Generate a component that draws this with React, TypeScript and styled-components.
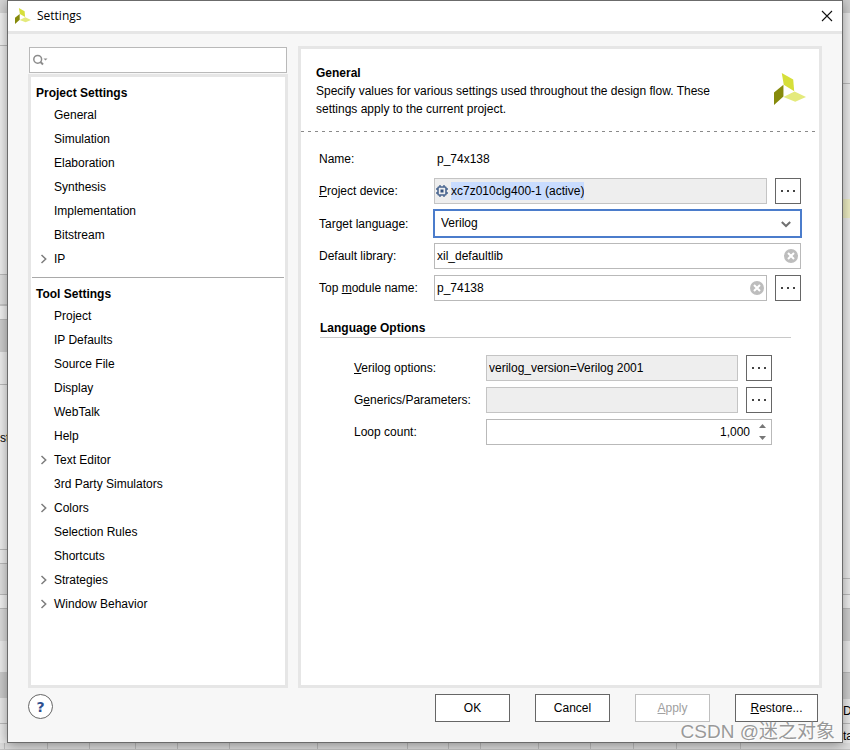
import React, { useState } from "react";
import styled, { createGlobalStyle } from "styled-components";

const GlobalStyle = createGlobalStyle`
  *, *::before, *::after { box-sizing: border-box; }
  html, body { margin: 0; padding: 0; }
  body, button, input, select {
    font-family: "Liberation Sans", Arial, sans-serif;
    font-size: 12px;
    line-height: 18px;
    color: #000;
  }
`;

/* ---------- application behind the dialog ---------- */

const Page = styled.div`
  display: grid;
  grid-template-columns: 7px minmax(0, 1fr) 7px;
  grid-template-rows: minmax(743px, 1fr) 7px;
  height: 100vh;
  min-height: 750px;
  overflow: hidden;
  background: #e6e6e6;
`;

const Edge = styled.div`
  display: flex;
  flex-direction: column;
  overflow: hidden;
`;

const Strip = styled.div<{ $h: number; $bg: string; $line?: boolean }>`
  flex: 0 0 ${(p) => p.$h}px;
  background: ${(p) => p.$bg};
  border-bottom: ${(p) => (p.$line ? "1px solid #bdbdbd" : "0")};
  line-height: ${(p) => Math.min(p.$h, 24)}px;
  white-space: nowrap;
`;

const BottomEdge = styled.div`
  grid-column: 1 / -1;
  display: flex;
  background: #dedede;
  border-bottom: 1px solid #c4c4c4;
`;

const Cell = styled.div<{ $w: number }>`
  flex: 0 1 ${(p) => p.$w}px;
  border-right: 1px solid #bdbdbd;
`;

/* ---------- dialog frame ---------- */

const Dialog = styled.section`
  position: relative;
  display: flex;
  flex-direction: column;
  min-width: 0;
  border: 1px solid #6b6b6b;
  background: #f7f7f7;
  box-shadow: 0 2px 12px rgba(0, 0, 0, 0.4);
  z-index: 1;
`;

const TitleBar = styled.header`
  display: flex;
  align-items: center;
  flex: 0 0 33px;
  padding: 0 9px 0 7px;
  background: #fff;
  border-bottom: 3px solid #e6e6e6;
`;

const Title = styled.h1`
  flex: 1;
  margin: 0 0 0 6px;
  font: 400 12px/18px "Open Sans", "Noto Sans", sans-serif;
`;

const CloseButton = styled.button`
  display: flex;
  padding: 0;
  border: 0;
  background: none;
`;

const Body = styled.div`
  flex: 1;
  display: flex;
  gap: 10px;
  min-height: 0;
  padding: 12px 20px 0;
`;

const Side = styled.div`
  display: flex;
  flex-direction: column;
  flex: 0 0 260px;
  padding-top: 1px;
`;

const SearchBox = styled.label`
  display: flex;
  align-items: center;
  height: 26px;
  margin: 0 1px 1px;
  padding: 0 3px;
  border: 1px solid #b9b9b9;
  background: #fff;
`;

const BareInput = styled.input`
  flex: 1;
  min-width: 0;
  padding: 0;
  border: 0;
  outline: 0;
  background: transparent;
`;

const Tree = styled.nav`
  flex: 1;
  padding-top: 6px;
  border: 3px solid #e6e6e6;
  background: #fff;
`;

const TreeHeading = styled.h2`
  margin: 0;
  padding-left: 5px;
  font-size: 12px;
  line-height: 20px;
`;

const TreeList = styled.ul`
  margin: 0;
  padding: 0;
  list-style: none;
`;

const TreeItem = styled.button`
  display: flex;
  align-items: center;
  width: 100%;
  height: 24px;
  padding: 0 0 0 9px;
  border: 0;
  background: none;
  text-align: left;
`;

const Twisty = styled.span`
  display: flex;
  flex: 0 0 14px;
`;

const TreeRule = styled.hr`
  height: 1px;
  margin: 6px 1px;
  border: 0;
  background: #a9a9a9;
`;

/* ---------- right panel ---------- */

const Panel = styled.main`
  flex: 1;
  min-width: 0;
  border: 3px solid #e6e6e6;
  background: #fff;
`;

const PanelHeader = styled.div`
  display: flex;
  justify-content: space-between;
  padding: 15px 13px 13px 15px;
`;

const PanelTitle = styled.h2`
  margin: 0;
  font-size: 12px;
  line-height: 18px;
`;

const Description = styled.p`
  max-width: 420px;
  margin: 0;
`;

const LogoSlot = styled.div`
  padding-top: 9px;
`;

const Dashes = styled.div`
  height: 1px;
  margin-right: 4px;
  background: repeating-linear-gradient(90deg, #8a8a8a 0 3px, transparent 3px 7px);
`;

const Form = styled.form`
  display: flex;
  flex-direction: column;
  gap: 6px;
  padding: 14px 18px 0;
`;

const Row = styled.div<{ $label: number }>`
  display: grid;
  grid-template-columns: ${(p) => p.$label}px minmax(0, 1fr);
  align-items: center;
  min-height: 26px;
`;

const Controls = styled.div`
  display: flex;
  gap: 8px;
`;

const Value = styled.output`
  padding-left: 3px;
`;

const Field = styled.div<{ $readOnly?: boolean }>`
  flex: 1;
  display: flex;
  align-items: center;
  min-width: 0;
  height: 26px;
  padding: 0 2px;
  border: 1px solid ${(p) => (p.$readOnly ? "#c4c4c4" : "#b9b9b9")};
  background: ${(p) => (p.$readOnly ? "#eee" : "#fff")};
`;

const DeviceField = styled(Field)`
  padding-left: 1px;
  gap: 3px;
`;

const SelectedInput = styled.input`
  field-sizing: content;
  height: 18px;
  padding: 0;
  border: 0;
  outline: 0;
  background: #c9dcfe;
`;

const IconButton = styled.button`
  display: flex;
  padding: 0;
  border: 0;
  background: none;
`;

const MoreButton = styled.button`
  display: flex;
  align-items: center;
  justify-content: center;
  flex: 0 0 26px;
  height: 26px;
  padding: 0;
  border: 1px solid #666;
  background: #fff;
`;

const Combo = styled.div`
  position: relative;
  flex: 1;
  margin: -1px;
`;

const Select = styled.select`
  appearance: none;
  display: block;
  width: 100%;
  height: 29px;
  padding: 0 24px 2px 6px;
  border: 2px solid #4b7ccb;
  border-radius: 0;
  outline: 0;
  background: #fff;
`;

const ComboArrow = styled.span`
  position: absolute;
  right: 11px;
  top: 12px;
  display: flex;
  pointer-events: none;
`;

const GroupTitle = styled.h3`
  margin: 12px 10px 11px 1px;
  border-bottom: 1px solid #c8c8c8;
  font-size: 12px;
  line-height: 18px;
`;

const Group = styled.div`
  display: flex;
  flex-direction: column;
  gap: 6px;
  padding: 0 29px 0 35px;
`;

const NumberInput = styled(BareInput)`
  text-align: right;
  padding-right: 9px;
`;

const Spinner = styled.div`
  display: flex;
  flex-direction: column;
  gap: 8px;
  padding-right: 3px;
`;

/* ---------- footer ---------- */

const Footer = styled.footer`
  display: flex;
  align-items: flex-start;
  flex: 0 0 54px;
  gap: 25px;
  padding: 6px 24px 0 20px;
`;

const HelpButton = styled.button`
  width: 25px;
  height: 25px;
  margin-right: auto;
  padding: 0;
  border: 1px solid #666;
  border-radius: 50%;
  background: #fff;
  color: #2f4f8f;
  font-family: "DejaVu Sans", sans-serif;
  font-weight: 700;
  font-size: 14px;
`;

const DialogButton = styled.button<{ $wide?: boolean }>`
  min-width: ${(p) => (p.$wide ? 83 : 75)}px;
  height: 28px;
  padding: 0 12px;
  border: 1px solid #666;
  background: #fff;
  &:disabled {
    border-color: #bfbfbf;
    color: #a0a0a0;
  }
`;

const Watermark = styled.div`
  position: absolute;
  right: 7px;
  bottom: -2px;
  font: 400 19px/24px "Liberation Sans", "Noto Sans CJK SC", sans-serif;
  color: rgba(135, 135, 135, 0.85);
  text-shadow: 1px 1px 0 #fff;
  pointer-events: none;
`;

/* ---------- icons ---------- */

const Logo = ({ size }: { size: number }) => (
  <svg width={size} height={size} viewBox="0 0 95 95" aria-hidden="true">
    <path d="M23 0 57 19 60 54 29 35Z" fill="#d6df3a" />
    <path d="M0 58 28 35V70L0 95Z" fill="#868a0b" />
    <path d="M28 71 61 55 95 71 63 85Z" fill="#e4ea7c" />
  </svg>
);

const CloseIcon = () => (
  <svg width="12" height="12" viewBox="0 0 12 12" aria-hidden="true">
    <path d="M1 1 11 11M11 1 1 11" stroke="#111" strokeWidth="1.1" />
  </svg>
);

const SearchIcon = () => (
  <svg width="15" height="12" viewBox="0 0 15 12" fill="none" aria-hidden="true">
    <circle cx="4.700" cy="5.300" r="3.900" stroke="#8c8c8c" strokeWidth="1.5" />
    <path d="M7.500 8 10 10.500" stroke="#8c8c8c" strokeWidth="2" />
    <path d="M10.500 4.500h4l-2 2z" fill="#8c8c8c" />
  </svg>
);

const TwistyIcon = () => (
  <svg width="8" height="10" viewBox="0 0 8 10" fill="none" aria-hidden="true">
    <path d="M1.500 1 5.700 5 1.500 9" stroke="#7d7d7d" strokeWidth="1.5" />
  </svg>
);

const ChipIcon = () => (
  <svg width="12" height="12" viewBox="0 0 12 12" fill="none" aria-hidden="true">
    <rect x="2" y="2" width="8" height="8" rx="1" stroke="#4a6690" strokeWidth="1.6" />
    <rect x="4.500" y="4.500" width="3" height="3" fill="#35527f" />
    <path
      d="M4 0v2M8 0v2M4 10v2M8 10v2M0 4h2M0 8h2M10 4h2M10 8h2"
      stroke="#4a6690"
      strokeWidth="1.4"
    />
  </svg>
);

const ClearIcon = () => (
  <svg width="14" height="14" viewBox="0 0 14 14" aria-hidden="true">
    <circle cx="7" cy="7" r="7" fill="#bdbdbd" />
    <path d="M4 4 10 10M10 4 4 10" stroke="#fff" strokeWidth="2" />
  </svg>
);

const ChevronIcon = () => (
  <svg width="10" height="7" viewBox="0 0 10 7" fill="none" aria-hidden="true">
    <path d="M0.800 1 5 5 9.200 1" stroke="#707070" strokeWidth="2" />
  </svg>
);

const DotsIcon = () => (
  <svg width="14" height="2" viewBox="0 0 14 2" fill="#444" aria-hidden="true">
    <path d="M0 0h2v2H0zM6 0h2v2H6zM12 0h2v2h-2z" />
  </svg>
);

const ArrowIcon = ({ down }: { down?: boolean }) => (
  <svg width="7" height="4" viewBox="0 0 7 4" fill="#777" aria-hidden="true">
    <path d={down ? "M0 0h7L3.500 4z" : "M0 4h7L3.500 0z"} />
  </svg>
);

/* ---------- content ---------- */

type Node = { name: string; expandable?: boolean };

const projectNodes: Node[] = [
  { name: "General" },
  { name: "Simulation" },
  { name: "Elaboration" },
  { name: "Synthesis" },
  { name: "Implementation" },
  { name: "Bitstream" },
  { name: "IP", expandable: true },
];

const toolNodes: Node[] = [
  { name: "Project" },
  { name: "IP Defaults" },
  { name: "Source File" },
  { name: "Display" },
  { name: "WebTalk" },
  { name: "Help" },
  { name: "Text Editor", expandable: true },
  { name: "3rd Party Simulators" },
  { name: "Colors", expandable: true },
  { name: "Selection Rules" },
  { name: "Shortcuts" },
  { name: "Strategies", expandable: true },
  { name: "Window Behavior", expandable: true },
];

const Branch = ({ nodes }: { nodes: Node[] }) => (
  <TreeList>
    {nodes.map((n) => (
      <li key={n.name}>
        <TreeItem type="button">
          <Twisty>{n.expandable && <TwistyIcon />}</Twisty>
          {n.name}
        </TreeItem>
      </li>
    ))}
  </TreeList>
);

const More = ({ label }: { label: string }) => (
  <MoreButton type="button" aria-label={label}>
    <DotsIcon />
  </MoreButton>
);

const cells = [5, 43, 42, 46, 42, 52, 88, 90, 41, 32, 58, 52, 43, 43, 64];

export default function App() {
  const [library, setLibrary] = useState("xil_defaultlib");
  const [topModule, setTopModule] = useState("p_74138");
  const [loops, setLoops] = useState(1000);

  return (
    <Page>
      <GlobalStyle />
      <Edge>
        <Strip $h={13} $bg="#d6d6d6" />
        <Strip $h={33} $bg="#f2f2f2" $line />
        <Strip $h={229} $bg="#f0f0f0" $line />
        <Strip $h={29} $bg="#e2e2e2" />
        <Strip $h={2} $bg="#c8c8c8" />
        <Strip $h={14} $bg="#f4f4f4" $line />
        <Strip $h={32} $bg="#d0d0d0" />
        <Strip $h={33} $bg="#f0f0f0" $line />
        <Strip $h={41} $bg="#f0f0f0" />
        <Strip $h={124} $bg="#f0f0f0" $line>st</Strip>
        <Strip $h={14} $bg="#f0f0f0" $line />
        <Strip $h={31} $bg="#e2e2e2" $line />
        <Strip $h={14} $bg="#f4f4f4" $line />
        <Strip $h={32} $bg="#dedede" />
        <Strip $h={31} $bg="#efefef" />
        <Strip $h={26} $bg="#cecece" />
        <Strip $h={26} $bg="#ececec" $line />
        <Strip $h={26} $bg="#ececec" />
      </Edge>

      <Dialog role="dialog" aria-label="Settings">
        <TitleBar>
          <Logo size={16} />
          <Title>Settings</Title>
          <CloseButton type="button" aria-label="Close">
            <CloseIcon />
          </CloseButton>
        </TitleBar>

        <Body>
          <Side>
            <SearchBox>
              <SearchIcon />
              <BareInput type="text" aria-label="Search settings" />
            </SearchBox>
            <Tree aria-label="Settings categories">
              <TreeHeading>Project Settings</TreeHeading>
              <Branch nodes={projectNodes} />
              <TreeRule />
              <TreeHeading>Tool Settings</TreeHeading>
              <Branch nodes={toolNodes} />
            </Tree>
          </Side>

          <Panel>
            <PanelHeader>
              <div>
                <PanelTitle>General</PanelTitle>
                <Description>
                  Specify values for various settings used throughout the design flow. These
                  settings apply to the current project.
                </Description>
              </div>
              <LogoSlot>
                <Logo size={32} />
              </LogoSlot>
            </PanelHeader>
            <Dashes />

            <Form onSubmit={(e) => e.preventDefault()}>
              <Row $label={115}>
                <label htmlFor="name">Name:</label>
                <Value id="name">p_74x138</Value>
              </Row>
              <Row $label={115}>
                <label htmlFor="device"><u>P</u>roject device:</label>
                <Controls>
                  <DeviceField $readOnly>
                    <ChipIcon />
                    <SelectedInput id="device" readOnly value="xc7z010clg400-1 (active)" />
                  </DeviceField>
                  <More label="Choose project device" />
                </Controls>
              </Row>
              <Row $label={115}>
                <label htmlFor="language">Target language:</label>
                <Combo>
                  <Select id="language" defaultValue="Verilog">
                    <option>Verilog</option>
                    <option>VHDL</option>
                  </Select>
                  <ComboArrow>
                    <ChevronIcon />
                  </ComboArrow>
                </Combo>
              </Row>
              <Row $label={115}>
                <label htmlFor="library">Default library:</label>
                <Field>
                  <BareInput id="library" value={library} onChange={(e) => setLibrary(e.target.value)} />
                  <IconButton type="button" aria-label="Clear default library" onClick={() => setLibrary("")}>
                    <ClearIcon />
                  </IconButton>
                </Field>
              </Row>
              <Row $label={115}>
                <label htmlFor="top">Top <u>m</u>odule name:</label>
                <Controls>
                  <Field>
                    <BareInput id="top" value={topModule} onChange={(e) => setTopModule(e.target.value)} />
                    <IconButton type="button" aria-label="Clear top module" onClick={() => setTopModule("")}>
                      <ClearIcon />
                    </IconButton>
                  </Field>
                  <More label="Choose top module" />
                </Controls>
              </Row>

              <GroupTitle>Language Options</GroupTitle>
              <Group>
                <Row $label={132}>
                  <label htmlFor="verilog"><u>V</u>erilog options:</label>
                  <Controls>
                    <Field $readOnly>
                      <BareInput id="verilog" readOnly value="verilog_version=Verilog 2001" />
                    </Field>
                    <More label="Edit Verilog options" />
                  </Controls>
                </Row>
                <Row $label={132}>
                  <label htmlFor="generics">G<u>e</u>nerics/Parameters:</label>
                  <Controls>
                    <Field $readOnly>
                      <BareInput id="generics" readOnly value="" />
                    </Field>
                    <More label="Edit generics and parameters" />
                  </Controls>
                </Row>
                <Row $label={132}>
                  <label htmlFor="loops">Loop count:</label>
                  <Field>
                    <NumberInput
                      id="loops"
                      inputMode="numeric"
                      value={loops.toLocaleString("en-US")}
                      onChange={(e) => setLoops(Number(e.target.value.replace(/\D/g, "")))}
                    />
                    <Spinner>
                      <IconButton type="button" aria-label="Increase" onClick={() => setLoops(loops + 1)}>
                        <ArrowIcon />
                      </IconButton>
                      <IconButton type="button" aria-label="Decrease" onClick={() => setLoops(loops - 1)}>
                        <ArrowIcon down />
                      </IconButton>
                    </Spinner>
                  </Field>
                </Row>
              </Group>
            </Form>
          </Panel>
        </Body>

        <Footer>
          <HelpButton type="button" aria-label="Help">?</HelpButton>
          <DialogButton type="button">OK</DialogButton>
          <DialogButton type="button">Cancel</DialogButton>
          <DialogButton type="button" disabled><u>A</u>pply</DialogButton>
          <DialogButton type="button" $wide><u>R</u>estore...</DialogButton>
        </Footer>
        <Watermark>CSDN @迷之对象</Watermark>
      </Dialog>

      <Edge>
        <Strip $h={13} $bg="#cfcfcf" />
        <Strip $h={71} $bg="#ececec" $line />
        <Strip $h={115} $bg="#ececec" />
        <Strip $h={19} $bg="#efefc4" />
        <Strip $h={361} $bg="#ececec" $line />
        <Strip $h={16} $bg="#ececec" $line />
        <Strip $h={14} $bg="#f0f0f0" $line />
        <Strip $h={32} $bg="#d0d0d0" />
        <Strip $h={32} $bg="#ececec" $line />
        <Strip $h={26} $bg="#d0d0d0" />
        <Strip $h={25} $bg="#ececec" $line>D</Strip>
        <Strip $h={24} $bg="#ececec">ta</Strip>
      </Edge>
      <BottomEdge>
        {cells.map((w, i) => (
          <Cell key={i} $w={w} />
        ))}
      </BottomEdge>
    </Page>
  );
}
